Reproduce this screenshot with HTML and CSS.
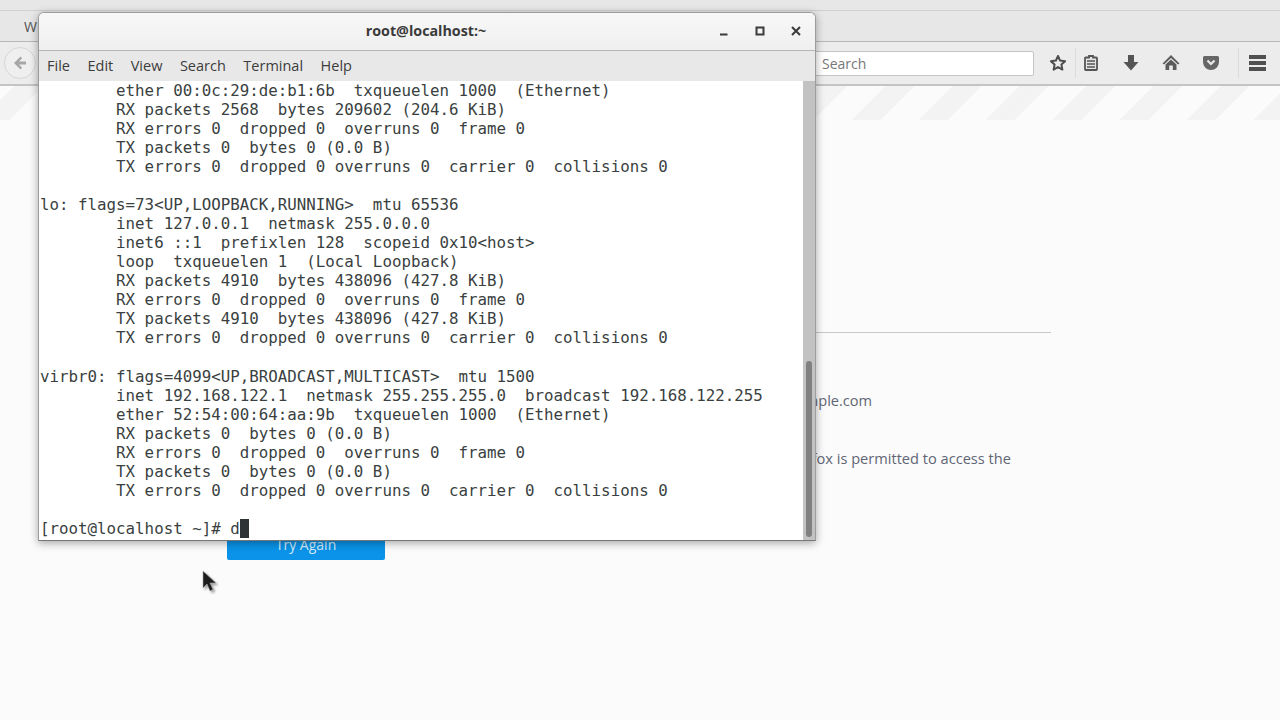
FILE: index.html
```html
<!DOCTYPE html>
<html lang="en">
<head>
<meta charset="utf-8">
<title>root@localhost:~</title>
<link rel="stylesheet" href="styles.css">
</head>
<body>
<div class="browser">
  <div class="top-strip"></div>
  <div class="tabbar"><span class="tab-title">W</span></div>
  <div class="toolbar">
    <div class="back">
      <svg viewBox="0 0 16 16" width="16" height="16"><path d="M8.500 1.500 2 8l6.500 6.500 1.600-1.700L7 9.600h7V6.400H7l3.100-3.200z" fill="#a6a6a6"/></svg>
    </div>
    <div class="spacer"></div>
    <div class="search">Search</div>
    <div class="tools">
      <svg class="ico star" viewBox="0 0 18 18" width="18" height="18"><path d="M9 2l2.100 4.600 5 .6-3.700 3.400 1 5L9 13.100 4.600 15.600l1-5L1.900 7.200l5-.6z" fill="none" stroke="#4d4d4d" stroke-width="2" stroke-linejoin="round"/></svg>
      <i class="sep sep-a"></i>
      <svg class="ico clip" viewBox="0 0 16 18" width="16" height="18"><path d="M6 2h4v1.500h3.200a.8.8 0 0 1 .8.8V15.200a.8.8 0 0 1-.8.8H2.800a.8.8 0 0 1-.8-.8V4.300a.8.8 0 0 1 .8-.8H6z" fill="#e4e4e4" stroke="#555" stroke-width="1.800"/><path d="M4 7h8M4 10h8M4 13h8" stroke="#555" stroke-width="1.500"/></svg>
      <svg class="ico down" viewBox="0 0 16 18" width="16" height="18"><path d="M5 1h6v7h4.500L8 16.500.5 8H5z" fill="#555"/></svg>
      <svg class="ico home" viewBox="0 0 18 18" width="18" height="18"><path d="M9 1 17.500 9.500 16 10.500 9 4 2 10.500.5 9.500z" fill="#5c5c5c"/><path d="M9 5.500 14.500 10.500V16h-3.700v-4.500H7.200V16H3.500V10.500z" fill="#5c5c5c"/></svg>
      <svg class="ico pocket" viewBox="0 0 18 18" width="18" height="18"><path d="M2.500 2h13A1.500 1.500 0 0 1 17 3.500V8a8 8 0 0 1-16 0V3.500A1.500 1.500 0 0 1 2.500 2z" fill="#666"/><path d="M5.500 6.500 9 10l3.500-3.500" fill="none" stroke="#e9e9e9" stroke-width="2.200"/></svg>
      <i class="sep sep-b"></i>
      <div class="burger"><b></b><b></b><b></b></div>
    </div>
  </div>
  <main class="page">
    <div class="stripes"></div>
    <div class="content">
      <hr class="rule">
      <ul class="hints">
        <li class="hint hint-1">Check the address for typing errors such as ww.example.com instead of www.example.com</li>
        <li class="hint hint-2">If your computer or network is protected by a firewall or proxy, make sure that Firefox is permitted to access the Web.</li>
      </ul>
      <button class="again">Try Again</button>
    </div>
  </main>
</div>

<section class="terminal">
  <header class="titlebar">
    <span class="title">root@localhost:~</span>
    <div class="winbtns">
      <svg viewBox="0 0 12 12" width="12" height="12"><path d="M2 9.500h7.500" stroke="#3a3a3a" stroke-width="2"/></svg>
      <svg viewBox="0 0 12 12" width="12" height="12"><path d="M2.500 2.500h7v7h-7z" fill="none" stroke="#3a3a3a" stroke-width="2"/></svg>
      <svg viewBox="0 0 12 12" width="12" height="12"><path d="M2 2l8 8M10 2l-8 8" stroke="#3a3a3a" stroke-width="2"/></svg>
    </div>
  </header>
  <nav class="menubar">
    <span>File</span><span>Edit</span><span>View</span><span>Search</span><span>Terminal</span><span>Help</span>
  </nav>
  <div class="termbody">
    <pre class="output">        ether 00:0c:29:de:b1:6b  txqueuelen 1000  (Ethernet)
        RX packets 2568  bytes 209602 (204.6 KiB)
        RX errors 0  dropped 0  overruns 0  frame 0
        TX packets 0  bytes 0 (0.0 B)
        TX errors 0  dropped 0 overruns 0  carrier 0  collisions 0

lo: flags=73&lt;UP,LOOPBACK,RUNNING&gt;  mtu 65536
        inet 127.0.0.1  netmask 255.0.0.0
        inet6 ::1  prefixlen 128  scopeid 0x10&lt;host&gt;
        loop  txqueuelen 1  (Local Loopback)
        RX packets 4910  bytes 438096 (427.8 KiB)
        RX errors 0  dropped 0  overruns 0  frame 0
        TX packets 4910  bytes 438096 (427.8 KiB)
        TX errors 0  dropped 0 overruns 0  carrier 0  collisions 0

virbr0: flags=4099&lt;UP,BROADCAST,MULTICAST&gt;  mtu 1500
        inet 192.168.122.1  netmask 255.255.255.0  broadcast 192.168.122.255
        ether 52:54:00:64:aa:9b  txqueuelen 1000  (Ethernet)
        RX packets 0  bytes 0 (0.0 B)
        RX errors 0  dropped 0  overruns 0  frame 0
        TX packets 0  bytes 0 (0.0 B)
        TX errors 0  dropped 0 overruns 0  carrier 0  collisions 0

[root@localhost ~]# d<span class="caret"> </span></pre>
    <div class="scrollbar"><div class="thumb"></div></div>
  </div>
</section>

<svg class="pointer" viewBox="0 0 18 24" width="18" height="24"><path d="M2 1v17l4-4 3 7 3-1.500-3-6.500h6z" fill="#1c1c1c" stroke="#aaa" stroke-width=".6"/></svg>
</body>
</html>
```
FILE: styles.css
```css
* { box-sizing: border-box; }
html, body { margin: 0; height: 100%; }
body { width: 1280px; height: 720px; overflow: hidden; position: relative; background: #fbfbfb; font-family: "Open Sans", "Noto Sans", sans-serif; }

.browser { display: flex; flex-direction: column; height: 720px; }
.top-strip { flex: none; height: 11px; background: #e7e7e7; border-bottom: 1px solid #d0d0d0; }
.tabbar { height: 31px; flex: none; background: #e7e7e7; border-bottom: 1px solid #b8b8b8; padding-left: 24px; display: flex; align-items: center; color: #555; font-size: 14px; }
.toolbar { height: 44px; flex: none; background: #ececec; border-bottom: 2px solid #c4c4c4; display: flex; align-items: center; padding-left: 4px; position: relative; }
.back { width: 32px; height: 32px; border-radius: 50%; background: #efefef; border: 1px solid #d6d6d6; display: flex; align-items: center; justify-content: center; }
.spacer { flex: 1; }
.search { width: 225px; height: 25px; margin-right: 14px; background: #fff; border: 1px solid #c4c4c4; border-radius: 2px; padding-left: 12px; font-size: 14px; line-height: 23px; color: #777; }
.tools { display: flex; align-items: center; width: 232px; height: 30px; position: relative; }
.ico { position: absolute; top: 6px; }
.star { left: 1px; }
.clip { left: 35px; }
.down { left: 75px; }
.home { left: 114px; }
.pocket { left: 154px; }
.sep { position: absolute; top: 0; width: 1px; height: 30px; background: #dcdcdc; }
.sep-a { left: 27px; }
.sep-b { left: 190px; }
.burger { position: absolute; left: 201px; top: 7px; width: 17px; display: flex; flex-direction: column; gap: 2.500px; }
.burger b { display: block; height: 3.500px; background: #505050; }

.page { flex: 1; position: relative; background: #fbfbfb; }
.stripes { height: 34px; background: repeating-linear-gradient(135deg, #fbfbfb 0, #fbfbfb 10px, #f3f3f3 10px, #f3f3f3 31px, #fbfbfb 31px, #fbfbfb 47.376px); }
.content { width: 824px; margin-left: 227px; padding-top: 212px; }
.rule { margin: 0; border: 0; border-top: 1px solid #c8c8c8; }
.hints { margin: 0; padding: 0 0 0 26px; list-style: none; }
.hint { font-size: 14.600px; line-height: 21px; color: #5f6675; }
.hint-1 { margin-top: 57px; margin-left: -1px; }
.hint-2 { margin-top: 37px; margin-left: -4px; width: 770px; }
.again { display: block; margin-top: 38px; width: 158px; height: 32px; border: 0; border-radius: 2px; background: #0a93e8; color: #d5ecfb; font: 14px "Open Sans", sans-serif; }

.terminal { position: absolute; left: 38px; top: 12px; width: 778px; height: 529px; display: flex; flex-direction: column; border-radius: 6px 6px 0 0; border: 1px solid #9c9c9c; border-bottom-color: #777; background: #fff; box-shadow: 0 2px 8px rgba(0,0,0,.35); overflow: hidden; }
.titlebar { height: 38px; flex: none; display: flex; align-items: center; justify-content: center; position: relative; padding: 0 2px 2px 0; background: linear-gradient(#f8f8f8, #efefef); border-bottom: 1px solid #b5b5b5; }
.title { font: bold 14.300px "Open Sans", sans-serif; color: #3a3a3a; }
.winbtns { position: absolute; right: 13px; top: 12px; display: flex; gap: 24px; }
.menubar { height: 30px; flex: none; display: flex; align-items: center; gap: 17.500px; padding: 0 0 2px 8px; background: #e8e8e8; font-size: 14.500px; color: #3c3c3c; }
.termbody { flex: 1; display: flex; min-height: 0; }
.output { flex: 1; margin: -0.2px 0 0; padding: 0 0 0 1px; font: 15.800px/19.040px "DejaVu Sans Mono", monospace; color: #3a3f41; white-space: pre; overflow: hidden; }
.caret { background: #2e3436; }
.scrollbar { width: 12px; flex: none; background: #c2c2c2; padding: 280px 3px 2px; }
.thumb { height: 176px; background: #808080; border-radius: 3px; }

.pointer { position: absolute; left: 201px; top: 570px; filter: drop-shadow(2px 2px 1px rgba(0,0,0,.35)); }
```
